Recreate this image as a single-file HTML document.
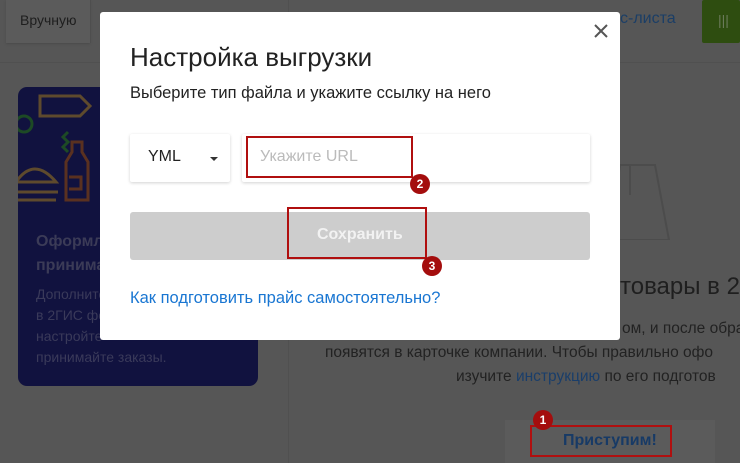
<!DOCTYPE html>
<html><head><meta charset="utf-8"><style>
*{margin:0;padding:0;box-sizing:border-box}
body{width:740px;height:463px;overflow:hidden;background:#565656;font-family:"Liberation Sans",Arial,sans-serif;position:relative}
.a{position:absolute;white-space:nowrap}
.badge{position:absolute;width:20px;height:20px;border-radius:50%;background:#a40d0d;color:#fff;font-size:12px;font-weight:bold;text-align:center;line-height:20px}
.red{position:absolute;border:2px solid #b00f0f}
</style></head><body>
<div class="a" style="left:6px;top:0;width:84px;height:43px;background:#5b5b5b;box-shadow:0 1px 2px #4a4a4a"></div>
<div class="a" style="left:20px;top:12px;font-size:14px;color:#1e1e1e">Вручную</div>
<div class="a" style="left:90px;top:0;width:1px;height:43px;background:#4e4e4e"></div>
<div class="a" style="left:0;top:62px;width:740px;height:1px;background:#505050"></div>
<div class="a" style="left:288px;top:0;width:1px;height:463px;background:#505050"></div>
<div class="a" style="left:702px;top:0;width:38px;height:43px;background:#2e4d10;border-radius:2px"></div>
<div class="a" style="left:718px;top:12px;color:#6a7a5a;font-size:14px">|||</div>
<div class="a" style="left:620px;top:10px;font-size:16px;color:#1b3e66">с-листа</div>
<div class="a" style="left:18px;top:87px;width:240px;height:299px;background:#11123f;border-radius:9px;overflow:hidden">
<svg width="100" height="130" style="position:absolute;left:0;top:0" fill="none" stroke-width="3">
<path d="M22 9 h40 l10 10 l-10 10 h-40 z" stroke="#5e4a2d"/>
<circle cx="6" cy="37" r="8" stroke="#1d4a25"/>
<path d="M50 45 l-5 5 l5 5 l-5 5 l5 5" stroke="#1d4a25"/>
<circle cx="96" cy="46" r="10" stroke="#1d4a25"/>
<path d="M48 113 v-38 l6 -10 v-10 h10 v10 l6 10 v38 z M51 90 h12 v12 h-12" stroke="#5a3120"/>
<path d="M-2 95 q18 -26 40 0 z M-2 105 h42 M-2 113 h40" stroke="#5e4a2d"/>
</svg>
<div class="a" style="left:18px;top:143px;font-size:16px;font-weight:bold;color:#3b3b57;line-height:24px">Оформляйте и<br>принимайте</div>
<div class="a" style="left:18px;top:197px;font-size:14px;color:#3a3a5a;line-height:21px">Дополнительно<br>в 2ГИС фо<br>настройте<br>принимайте заказы.</div>
</div>
<svg class="a" style="left:610px;top:160px" width="80" height="80" fill="none" stroke="#4c4c4c" stroke-width="2"><path d="M10 5 h35 l14 75 h-60 z M20 5 v30"/></svg>
<div class="a" style="left:620px;top:273px;font-size:24px;color:#1f1f1f">товары в 2</div>
<div class="a" style="left:300px;top:317px;width:520px;font-size:15.5px;color:#222;line-height:24px">
<div style="position:absolute;left:322px;top:0">ом, и после обра</div>
<div style="position:absolute;left:25px;top:24px">появятся в карточке компании. Чтобы правильно офо</div>
<div style="position:absolute;left:156px;top:48px">изучите <span style="color:#1a3e6a">инструкцию</span> по его подготов</div>
</div>
<div class="a" style="left:505px;top:420px;width:210px;height:43px;background:#5b5b5b"></div>
<div class="a" style="left:563px;top:432px;font-size:16px;font-weight:bold;color:#173a66">Приступим!</div>
<div class="red" style="left:530px;top:425px;width:142px;height:32px"></div>
<div class="badge" style="left:533px;top:410px">1</div>

<div class="a" style="left:100px;top:12px;width:520px;height:328px;background:#fff;border-radius:3px"></div>
<svg class="a" style="left:594px;top:24px" width="14" height="14" stroke="#555" stroke-width="2"><path d="M1 1 L13 13 M13 1 L1 13"/></svg>
<div class="a" style="left:130px;top:42px;font-size:26px;color:#222">Настройка выгрузки</div>
<div class="a" style="left:130px;top:84px;font-size:16.5px;color:#222">Выберите тип файла и укажите ссылку на него</div>
<div class="a" style="left:130px;top:134px;width:100px;height:48px;background:#fff;box-shadow:0 1px 3px rgba(0,0,0,.18);border-radius:2px"></div>
<div class="a" style="left:148px;top:148px;font-size:16px;color:#222">YML</div>
<div class="a" style="left:210px;top:157px;border-left:4px solid transparent;border-right:4px solid transparent;border-top:4px solid #333"></div>
<div class="a" style="left:242px;top:134px;width:348px;height:48px;background:#fff;box-shadow:0 1px 3px rgba(0,0,0,.18);border-radius:2px"></div>
<div class="a" style="left:260px;top:148px;font-size:16px;color:#bbb">Укажите URL</div>
<div class="red" style="left:246px;top:136px;width:167px;height:42px"></div>
<div class="badge" style="left:410px;top:174px">2</div>
<div class="a" style="left:130px;top:212px;width:460px;height:48px;background:#cdcdcd;border-radius:3px"></div>
<div class="a" style="left:317px;top:226px;font-size:16px;font-weight:bold;color:#f2f2f2">Сохранить</div>
<div class="red" style="left:287px;top:207px;width:140px;height:52px"></div>
<div class="badge" style="left:422px;top:256px">3</div>
<div class="a" style="left:130px;top:289px;font-size:16.5px;color:#1976d2">Как подготовить прайс самостоятельно?</div>
</body></html>
